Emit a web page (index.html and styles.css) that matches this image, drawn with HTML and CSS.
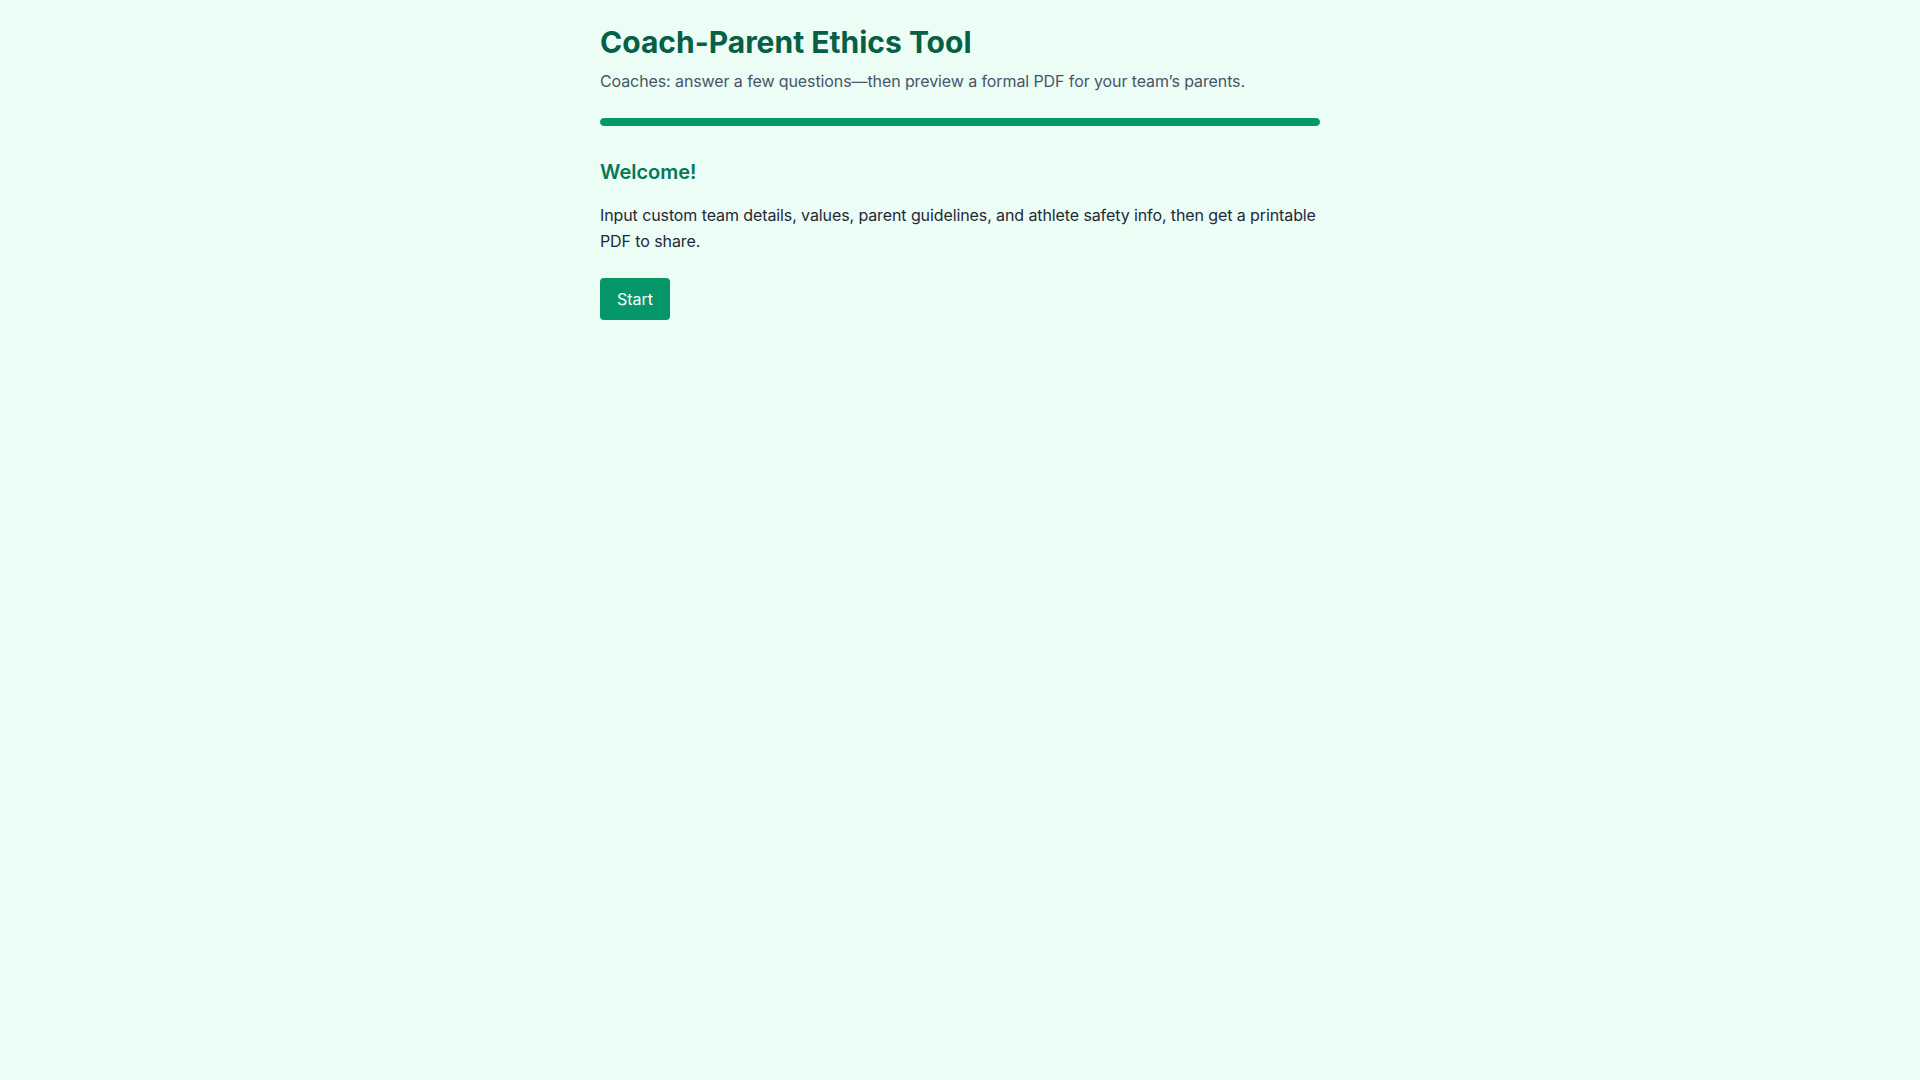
FILE: index.html
```html
<!DOCTYPE html>
<html lang="en">
<head>
    <meta charset="UTF-8">
    <meta name="viewport" content="width=device-width, initial-scale=1.0">
    <title>Coach-Parent Ethics Tool</title>
    <link rel="stylesheet" href="styles.css">
</head>
<body>
    <div class="wrap">
        <h1 class="title">Coach-Parent Ethics Tool</h1>
        <p class="subtitle">Coaches: answer a few questions—then preview a formal PDF for your team’s parents.</p>
        <div class="progress">
            <div class="progress-fill" style="width: 100%"></div>
        </div>
        <div class="step">
            <h2>Welcome!</h2>
            <p>Input custom team details, values, parent guidelines, and athlete safety info, then get a printable PDF to share.</p>
            <button class="btn">Start</button>
        </div>
    </div>
</body>
</html>
```

FILE: styles.css
```css
* {
    box-sizing: border-box;
}

body {
    margin: 0;
    background: #ecfdf5;
    font-family: Inter, "Noto Sans", sans-serif;
    color: #1f2937;
}

.wrap {
    max-width: 720px;
    margin: 0 auto;
    padding: 24px 0 40px;
}

.title {
    margin: 0;
    font-size: 30px;
    line-height: 1.2;
    font-weight: 700;
    color: #065f46;
}

.subtitle {
    margin: 9px 0 0;
    font-size: 16px;
    line-height: 1.5;
    letter-spacing: -0.1px;
    color: #475569;
}

.progress {
    margin-top: 25px;
    height: 8px;
    border-radius: 4px;
    background: #d1fae5;
    overflow: hidden;
}

.progress-fill {
    height: 100%;
    background: #059669;
    border-radius: 4px;
}

.step {
    padding-top: 34px;
}

.step h2 {
    margin: 0;
    font-size: 20px;
    line-height: 1.2;
    font-weight: 600;
    color: #047857;
}

.step p {
    margin: 18px 0 23px;
    font-size: 16px;
    line-height: 1.65;
    letter-spacing: -0.1px;
}

.btn {
    padding: 11px 17px;
    font-family: inherit;
    font-size: 16px;
    border: none;
    border-radius: 4px;
    background: #059669;
    color: white;
    cursor: pointer;
}

.btn:hover {
    background: #047857;
}
```
